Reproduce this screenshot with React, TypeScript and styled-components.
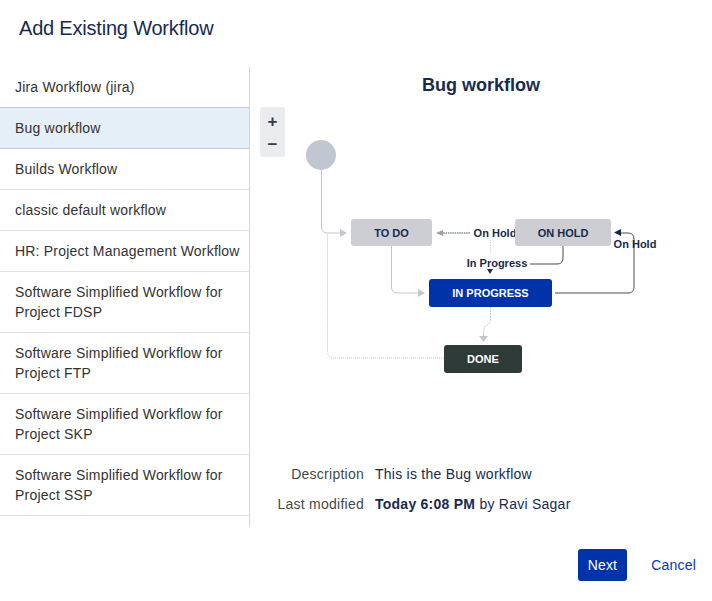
import React from "react";
import styled, { createGlobalStyle, css } from "styled-components";

const GlobalStyle = createGlobalStyle`
  html, body { margin: 0; padding: 0; background: #fff; }
  body { font-family: "Liberation Sans", Arial, sans-serif; color: #172b4d; }
  * { box-sizing: border-box; }
`;

const Dialog = styled.div`
  width: 712px;
  height: 601px;
  display: flex;
  flex-direction: column;
  background: #fff;
`;

const Header = styled.header`
  height: 67px;
  padding: 16px 19px 0;
`;

const Title = styled.h2`
  margin: 0;
  font-size: 20px;
  line-height: 24px;
  font-weight: 400;
  letter-spacing: -0.2px;
  color: #172b4d;
`;

const Body = styled.div`
  display: grid;
  grid-template-columns: 250px 1fr;
  height: 460px;
`;

const List = styled.ul`
  margin: 0;
  padding: 0;
  list-style: none;
  border-right: 1px solid #d4d6db;
`;

const Item = styled.li<{ $selected?: boolean }>`
  position: relative;
  padding: 10px 6px 10px 15px;
  font-size: 14px;
  line-height: 20px;
  letter-spacing: 0.2px;
  color: #333;
  border-bottom: 1px solid #dfe1e6;
  ${(p) =>
    p.$selected &&
    css`
      background: #e4eff8;
      border-bottom-color: #c1c7d0;
      box-shadow: 0 -1px 0 #c1c7d0;
    `}
`;

const Panel = styled.section`
  display: flex;
  flex-direction: column;
`;

const PanelTitle = styled.h3`
  margin: 0;
  padding-top: 6px;
  font-size: 18px;
  line-height: 24px;
  font-weight: 700;
  text-align: center;
  color: #172b4d;
`;

const DiagramArea = styled.div`
  position: relative;
  margin-top: 3px;
  height: 340px;
`;

const ZoomControl = styled.div`
  position: absolute;
  left: 10px;
  top: 7px;
  width: 25px;
  height: 50px;
  padding-top: 3px;
  border-radius: 3px;
  background: #ebecf0;
  display: flex;
  flex-direction: column;
`;

const ZoomButton = styled.button`
  height: 23px;
  border: 0;
  background: transparent;
  padding: 0;
  font-family: "Liberation Sans", Arial, sans-serif;
  font-size: 17px;
  font-weight: 700;
  line-height: 1;
  color: #333d3a;
`;

const Details = styled.dl`
  margin: 24px 0 0;
  display: grid;
  grid-template-columns: 114px 1fr;
  column-gap: 11px;
  row-gap: 10px;
  font-size: 14px;
  line-height: 20px;
  letter-spacing: 0.25px;
`;

const Label = styled.dt`
  text-align: right;
  color: #3f4b48;
`;

const Value = styled.dd`
  margin: 0;
  color: #172b4d;
  b { font-weight: 700; }
`;

const Footer = styled.footer`
  display: flex;
  justify-content: flex-end;
  align-items: center;
  padding: 22px 6px 0 0;
  gap: 14px;
`;

const Button = styled.button<{ $primary?: boolean }>`
  height: 32px;
  padding: 0 10px;
  border: 0;
  border-radius: 3px;
  font-family: "Liberation Sans", Arial, sans-serif;
  font-size: 14px;
  line-height: 32px;
  letter-spacing: 0.2px;
  cursor: pointer;
  ${(p) =>
    p.$primary
      ? css`
          background: #0033a9;
          color: #fff;
        `
      : css`
          background: transparent;
          color: #0a38b0;
        `}
`;

const items = [
  "Jira Workflow (jira)",
  "Bug workflow",
  "Builds Workflow",
  "classic default workflow",
  "HR: Project Management Workflow",
  "Software Simplified Workflow for Project FDSP",
  "Software Simplified Workflow for Project FTP",
  "Software Simplified Workflow for Project SKP",
  "Software Simplified Workflow for Project SSP",
];

const GRAY = "#c1c7d0";
const DARK = "#44504c";

const nodeText = {
  fontFamily: "'Liberation Sans', Arial, sans-serif",
  fontSize: 11,
  fontWeight: 700,
  textAnchor: "middle" as const,
  dominantBaseline: "central" as const,
};

const Diagram = () => (
  <svg width="462" height="340" viewBox="250 100 462 340" style={{ display: "block" }}>
    <circle cx="321" cy="155" r="15" fill={GRAY} />
    {/* start -> TO DO */}
    <path d="M321.5 170 V227 Q321.5 233 327.5 233 H341" fill="none" stroke={GRAY} />
    <polygon points="340,229 347,233 340,237" fill={GRAY} />
    {/* DONE loop */}
    <path d="M444 358 H334 Q327.5 358 327.5 351 V234" fill="none" stroke={GRAY} strokeDasharray="1 1" />
    {/* TO DO -> IN PROGRESS */}
    <path d="M391.5 246 V287 Q391.5 293 397.5 293 H419" fill="none" stroke={GRAY} />
    <polygon points="418,289 425,293 418,297" fill={GRAY} />
    {/* IN PROGRESS -> DONE */}
    <path d="M490.5 307 V319 Q490.5 324 486 325.5 Q483.5 327 483.5 332 V337" fill="none" stroke={GRAY} strokeDasharray="2 1" />
    <polygon points="479,336 488,336 483.5,342" fill={GRAY} />
    {/* ON HOLD -> TO DO */}
    <path d="M470 233 H442" fill="none" stroke={DARK} strokeDasharray="1.5 0.8" />
    <polygon points="443,230 436,233 443,236" fill="#9aa1ab" />
    <path d="M490.5 240 V255" fill="none" stroke={GRAY} strokeDasharray="1 1.5" />
    <text x="495" y="233" {...nodeText} fill="#172b4d">On Hold</text>
    {/* ON HOLD -> IN PROGRESS label */}
    <path d="M530 264 H557 Q563 264 563 258 V246" fill="none" stroke={DARK} />
    <text x="497" y="263" {...nodeText} fill="#172b4d">In Progress</text>
    <polygon points="487,269 493,269 490,274" fill="#172b4d" />
    {/* IN PROGRESS -> ON HOLD */}
    <path d="M555 293 H628 Q634 293 634 287 V239 Q634 233 628 233 H620" fill="none" stroke={DARK} />
    <polygon points="621,229 614,232.5 621,236" fill="#172b4d" />
    <text x="635" y="244" {...nodeText} fill="#172b4d">On Hold</text>
    {/* nodes */}
    <rect x="351" y="219" width="81" height="27" rx="3" fill="#ccced4" />
    <text x="391.5" y="233" {...nodeText} fill="#172b4d">TO DO</text>
    <rect x="515" y="219" width="96" height="27" rx="3" fill="#ccced4" />
    <text x="563" y="233" {...nodeText} fill="#172b4d">ON HOLD</text>
    <rect x="429" y="279" width="123" height="28" rx="3" fill="#0033a9" />
    <text x="490.5" y="293" {...nodeText} fill="#fff">IN PROGRESS</text>
    <rect x="444" y="345" width="78" height="28" rx="3" fill="#2f3b38" />
    <text x="483" y="359" {...nodeText} fill="#fff">DONE</text>
  </svg>
);

export default function App() {
  return (
    <>
      <GlobalStyle />
      <Dialog>
        <Header>
          <Title>Add Existing Workflow</Title>
        </Header>
        <Body>
          <List>
            {items.map((it, i) => (
              <Item key={it} $selected={i === 1}>
                {it}
              </Item>
            ))}
          </List>
          <Panel>
            <PanelTitle>Bug workflow</PanelTitle>
            <DiagramArea>
              <Diagram />
              <ZoomControl>
                <ZoomButton aria-label="Zoom in">+</ZoomButton>
                <ZoomButton aria-label="Zoom out">−</ZoomButton>
              </ZoomControl>
            </DiagramArea>
            <Details>
              <Label>Description</Label>
              <Value>This is the Bug workflow</Value>
              <Label>Last modified</Label>
              <Value>
                <b>Today 6:08 PM</b> by Ravi Sagar
              </Value>
            </Details>
          </Panel>
        </Body>
        <Footer>
          <Button $primary>Next</Button>
          <Button>Cancel</Button>
        </Footer>
      </Dialog>
    </>
  );
}
